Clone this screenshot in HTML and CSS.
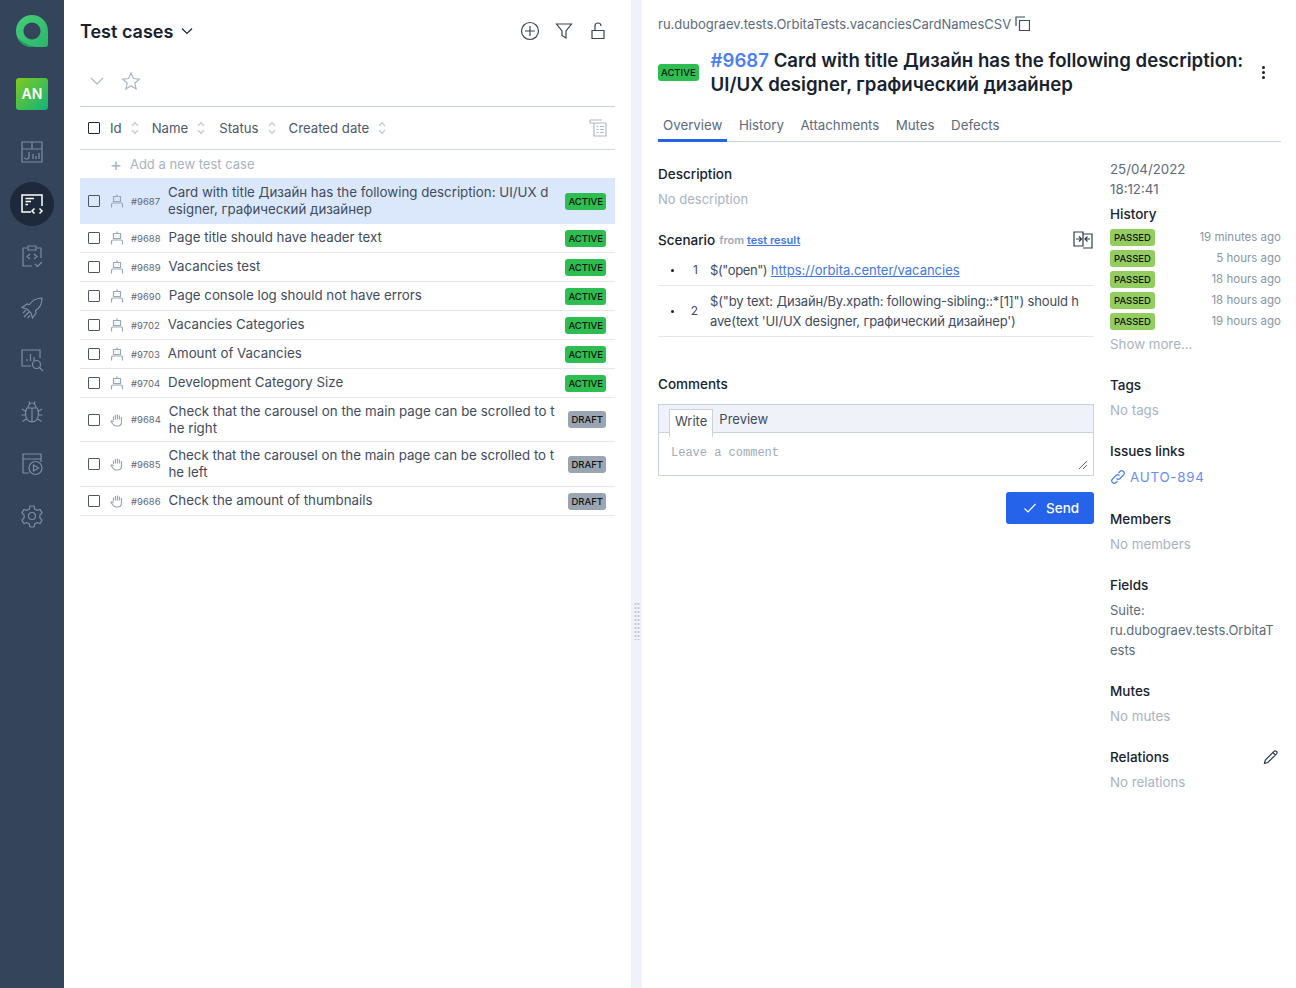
FILE: index.html
```html
<!DOCTYPE html>
<html lang="en">
<head>
    <meta charset="UTF-8">
    <meta name="viewport" content="width=device-width, initial-scale=1.0">
    <title>Test cases</title>
    <link rel="stylesheet" href="styles.css">
</head>
<body>
    <nav class="sidebar">
        <svg class="logo" width="34" height="34" viewBox="0 0 34 34">
            <defs>
                <linearGradient id="logoFill" x1="0" y1="0" x2="1" y2="1">
                    <stop offset="0" stop-color="#45cf78"/>
                    <stop offset="1" stop-color="#2bb56b"/>
                </linearGradient>
            </defs>
            <path d="M17 1C8 1 1 8 1 17s7 16 16 16h13c1.800 0 3-1.200 3-3V17C33 8 26 1 17 1zm0 7.500c4.700 0 8.500 3.800 8.500 8.500s-3.800 8.500-8.500 8.500-8.500-3.800-8.500-8.500 3.800-8.500 8.500-8.500z" fill="url(#logoFill)"/>
            <path d="M2 23c3 6.500 8 10 15 10h4C13 31.500 7 28 2 23z" fill="#1f9e63"/>
        </svg>
        <div class="avatar">AN</div>
        <a class="nav-item">
            <svg width="24" height="24" viewBox="0 0 24 24"><path d="M2 2h20v20H2zM2 9h20M12 2v7M9 12v5c0 1.500-1 2-2.500 2s-2-.5-2.500-1.500M13 14v5M16 16v3M19 13v6"/></svg>
        </a>
        <a class="nav-item active">
            <svg width="24" height="24" viewBox="0 0 24 24"><path d="M11 20H2V3h20v11M5.500 6.500H14M5.500 9.500H11M5.500 12.500H8M14.500 16.500L12 19l2.500 2.500M19.500 16.500L22 19l-2.500 2.500"/></svg>
        </a>
        <a class="nav-item">
            <svg width="24" height="24" viewBox="0 0 24 24"><path d="M7 4H3v18h9M17 4h4v10M8 2h8v4H8zM10 10l-3 2.500L10 15M14 10l3 2.500-3 2.500M15 20l2.500 2.500L22 18"/></svg>
        </a>
        <a class="nav-item">
            <svg width="24" height="24" viewBox="0 0 24 24"><path d="M22 2c-6 0-9.500 2-12.500 6.500L7 8l-5 3.500 5 1.500 4 4 1.500 5 3.500-5-.5-2.500C20 12 22 8 22 2zM3 17l3-3M4 21l5-5M7.500 22l2.500-2.500"/></svg>
        </a>
        <a class="nav-item">
            <svg width="24" height="24" viewBox="0 0 24 24"><path d="M11 18H2V2h18v8M7 13v-2M10.500 13V6M14 13V9"/><circle cx="16.500" cy="16.500" r="4"/><path d="M19.500 19.500L23 23"/></svg>
        </a>
        <a class="nav-item">
            <svg width="24" height="24" viewBox="0 0 24 24"><path d="M7 8h10c1 2 1.500 4 1.500 6 0 5-3 8-6.500 8s-6.500-3-6.500-8c0-2 .5-4 1.500-6zM8 8c0-3 2-5 4-5s4 2 4 5M12 8v14M9 1.500L10 4M15 1.500L14 4M5.500 11L2 9M18.500 11L22 9M5.500 15H1.500M18.500 15h4M6 19l-3.500 2.500M18 19l3.500 2.500"/></svg>
        </a>
        <a class="nav-item">
            <svg width="24" height="24" viewBox="0 0 24 24"><path d="M9 21H3V2h18v8M3 7h18"/><circle cx="15.500" cy="16" r="6.500"/><path d="M13.500 13v6l5-3z"/></svg>
        </a>
        <a class="nav-item">
            <svg width="24" height="24" viewBox="0 0 24 24"><circle cx="12" cy="12" r="3.500"/><path d="M10 2h4l.7 3 2.400 1.400 3-.9 2 3.500-2.200 2.100v2.800l2.200 2.100-2 3.500-3-.9-2.400 1.400-.7 3h-4l-.7-3-2.400-1.400-3 .9-2-3.500 2.200-2.100v-2.800L1.900 9l2-3.500 3 .9 2.400-1.400z"/></svg>
        </a>
    </nav>

    <main class="cases-panel">
        <header class="cases-header">
            <h1>Test cases</h1>
            <svg class="chevron" width="14" height="14" viewBox="0 0 14 14"><path d="M2 4.500l5 5 5-5"/></svg>
            <div class="cases-actions">
                <svg width="20" height="20" viewBox="0 0 20 20"><circle cx="10" cy="10" r="8.500"/><path d="M10 5v10M5 10h10"/></svg>
                <svg width="20" height="20" viewBox="0 0 20 20"><path d="M2.500 3h15l-5.500 7v7l-4-2.500V10z"/></svg>
                <svg width="20" height="20" viewBox="0 0 20 20"><path d="M4 9.500h12v8H4zM7 9.500V5c0-1.500 1-3 3-3s3 1.500 3 3"/></svg>
            </div>
        </header>

        <div class="cases-tools">
            <svg class="tool-chevron" width="16" height="16" viewBox="0 0 16 16"><path d="M2 5l6 6 6-6"/></svg>
            <svg class="tool-star" width="20" height="20" viewBox="0 0 20 20"><path d="M10 2l2.400 5.500 5.800.6-4.400 3.900 1.300 5.900L10 14.800 4.900 17.900l1.300-5.900L1.800 8.100l5.800-.6z"/></svg>
        </div>

        <div class="table-head">
            <span class="checkbox dark"></span>
            <span class="sort-col col-id">Id</span>
            <svg class="sort" width="8" height="14" viewBox="0 0 8 14"><path d="M1 5l3-3.500L7 5M1 9l3 3.500L7 9"/></svg>
            <span class="sort-col col-name">Name</span>
            <svg class="sort" width="8" height="14" viewBox="0 0 8 14"><path d="M1 5l3-3.500L7 5M1 9l3 3.500L7 9"/></svg>
            <span class="sort-col col-status">Status</span>
            <svg class="sort" width="8" height="14" viewBox="0 0 8 14"><path d="M1 5l3-3.500L7 5M1 9l3 3.500L7 9"/></svg>
            <span class="sort-col col-date">Created date</span>
            <svg class="sort" width="8" height="14" viewBox="0 0 8 14"><path d="M1 5l3-3.500L7 5M1 9l3 3.500L7 9"/></svg>
            <svg class="columns-icon" width="18" height="18" viewBox="0 0 18 18"><path d="M1 1h12M1 1v3h4M5 4h12v13H5zM7.500 7.500h2M11 7.500h4M7.500 10.500h2M11 10.500h4M7.500 13.500h2M11 13.500h4"/></svg>
        </div>

        <div class="add-row"><span class="plus">+</span> Add a new test case</div>

        <div class="row selected">
            <span class="checkbox"></span>
            <svg class="type-icon" width="14" height="14" viewBox="0 0 14 14"><path d="M3.500 2.500h7v5h-7zM7 2.500V.5M1.500 13.500v-3c0-1 .7-1.500 1.500-1.500h8c.8 0 1.500.5 1.500 1.500v3M5.500 5h.5M8 5h.5"/></svg>
            <span class="case-id">#9687</span>
            <span class="case-title">Card with title Дизайн has the following description: UI/UX designer, графический дизайнер</span>
            <span class="badge active-badge">ACTIVE</span>
        </div>
        <div class="row">
            <span class="checkbox"></span>
            <svg class="type-icon" width="14" height="14" viewBox="0 0 14 14"><path d="M3.500 2.500h7v5h-7zM7 2.500V.5M1.500 13.500v-3c0-1 .7-1.500 1.500-1.500h8c.8 0 1.500.5 1.500 1.500v3M5.500 5h.5M8 5h.5"/></svg>
            <span class="case-id">#9688</span>
            <span class="case-title">Page title should have header text</span>
            <span class="badge active-badge">ACTIVE</span>
        </div>
        <div class="row">
            <span class="checkbox"></span>
            <svg class="type-icon" width="14" height="14" viewBox="0 0 14 14"><path d="M3.500 2.500h7v5h-7zM7 2.500V.5M1.500 13.500v-3c0-1 .7-1.500 1.500-1.500h8c.8 0 1.500.5 1.500 1.500v3M5.500 5h.5M8 5h.5"/></svg>
            <span class="case-id">#9689</span>
            <span class="case-title">Vacancies test</span>
            <span class="badge active-badge">ACTIVE</span>
        </div>
        <div class="row">
            <span class="checkbox"></span>
            <svg class="type-icon" width="14" height="14" viewBox="0 0 14 14"><path d="M3.500 2.500h7v5h-7zM7 2.500V.5M1.500 13.500v-3c0-1 .7-1.500 1.500-1.500h8c.8 0 1.500.5 1.500 1.500v3M5.500 5h.5M8 5h.5"/></svg>
            <span class="case-id">#9690</span>
            <span class="case-title">Page console log should not have errors</span>
            <span class="badge active-badge">ACTIVE</span>
        </div>
        <div class="row">
            <span class="checkbox"></span>
            <svg class="type-icon" width="14" height="14" viewBox="0 0 14 14"><path d="M3.500 2.500h7v5h-7zM7 2.500V.5M1.500 13.500v-3c0-1 .7-1.500 1.500-1.500h8c.8 0 1.500.5 1.500 1.500v3M5.500 5h.5M8 5h.5"/></svg>
            <span class="case-id">#9702</span>
            <span class="case-title">Vacancies Categories</span>
            <span class="badge active-badge">ACTIVE</span>
        </div>
        <div class="row">
            <span class="checkbox"></span>
            <svg class="type-icon" width="14" height="14" viewBox="0 0 14 14"><path d="M3.500 2.500h7v5h-7zM7 2.500V.5M1.500 13.500v-3c0-1 .7-1.500 1.500-1.500h8c.8 0 1.500.5 1.500 1.500v3M5.500 5h.5M8 5h.5"/></svg>
            <span class="case-id">#9703</span>
            <span class="case-title">Amount of Vacancies</span>
            <span class="badge active-badge">ACTIVE</span>
        </div>
        <div class="row">
            <span class="checkbox"></span>
            <svg class="type-icon" width="14" height="14" viewBox="0 0 14 14"><path d="M3.500 2.500h7v5h-7zM7 2.500V.5M1.500 13.500v-3c0-1 .7-1.500 1.500-1.500h8c.8 0 1.500.5 1.500 1.500v3M5.500 5h.5M8 5h.5"/></svg>
            <span class="case-id">#9704</span>
            <span class="case-title">Development Category Size</span>
            <span class="badge active-badge">ACTIVE</span>
        </div>
        <div class="row tall">
            <span class="checkbox"></span>
            <svg class="type-icon" width="14" height="14" viewBox="0 0 14 14"><path d="M3.500 7V3.500M5.500 6.500V2M7.500 6.500V1.500M9.500 6.500V2.500M11.500 7V4v5c0 2.500-1.500 4-4 4H6c-1.500 0-2.500-1-3.500-2.500L1 8.500C1.500 7.500 2.800 7.800 3.500 9"/></svg>
            <span class="case-id">#9684</span>
            <span class="case-title">Check that the carousel on the main page can be scrolled to the right</span>
            <span class="badge draft-badge">DRAFT</span>
        </div>
        <div class="row tall">
            <span class="checkbox"></span>
            <svg class="type-icon" width="14" height="14" viewBox="0 0 14 14"><path d="M3.500 7V3.500M5.500 6.500V2M7.500 6.500V1.500M9.500 6.500V2.500M11.500 7V4v5c0 2.500-1.500 4-4 4H6c-1.500 0-2.500-1-3.500-2.500L1 8.500C1.500 7.500 2.800 7.800 3.500 9"/></svg>
            <span class="case-id">#9685</span>
            <span class="case-title">Check that the carousel on the main page can be scrolled to the left</span>
            <span class="badge draft-badge">DRAFT</span>
        </div>
        <div class="row">
            <span class="checkbox"></span>
            <svg class="type-icon" width="14" height="14" viewBox="0 0 14 14"><path d="M3.500 7V3.500M5.500 6.500V2M7.500 6.500V1.500M9.500 6.500V2.500M11.500 7V4v5c0 2.500-1.500 4-4 4H6c-1.500 0-2.500-1-3.500-2.500L1 8.500C1.500 7.500 2.800 7.800 3.500 9"/></svg>
            <span class="case-id">#9686</span>
            <span class="case-title">Check the amount of thumbnails</span>
            <span class="badge draft-badge">DRAFT</span>
        </div>
    </main>

    <div class="gutter"><div class="grip"></div></div>

    <section class="detail">
        <div class="suite-path">
            ru.dubograev.tests.OrbitaTests.vacanciesCardNamesCSV
            <svg width="15" height="15" viewBox="0 0 15 15"><path d="M4.500 4.500h10v10h-10zM1 10V1h9"/></svg>
        </div>
        <div class="title-row">
            <span class="badge active-badge">ACTIVE</span>
            <h2><a class="title-id">#9687</a> Card with title Дизайн has the following description: UI/UX designer, графический дизайнер</h2>
            <div class="more"><i></i><i></i><i></i></div>
        </div>
        <div class="tabs">
            <a class="tab current">Overview</a>
            <a class="tab">History</a>
            <a class="tab">Attachments</a>
            <a class="tab">Mutes</a>
            <a class="tab">Defects</a>
        </div>

        <div class="detail-body">
            <div class="detail-main">
                <h3>Description</h3>
                <p class="empty">No description</p>

                <div class="scenario-head">
                    <h3>Scenario</h3>
                    <span class="from">from <a href="#">test result</a></span>
                    <svg width="20" height="18" viewBox="0 0 20 18"><path d="M10 1H1v14h9V1zM10 3h9v14h-9M3 8h5M6 5.500L8.500 8 6 10.500M17 8h-5M14.500 5.500L12 8l2.500 2.500"/></svg>
                </div>
                <div class="step">
                    <span class="dot"></span>
                    <span class="step-no">1</span>
                    <span class="step-text"><span class="step-cmd">$("open")</span> <a href="#">https://orbita.center/vacancies</a></span>
                </div>
                <div class="step">
                    <span class="dot"></span>
                    <span class="step-no">2</span>
                    <span class="step-text long">$("by text: Дизайн/By.xpath: following-sibling::*[1]") should have(text 'UI/UX designer, графический дизайнер')</span>
                </div>

                <h3 class="comments-title">Comments</h3>
                <div class="editor">
                    <div class="editor-tabs">
                        <span class="editor-tab current">Write</span>
                        <span class="editor-tab">Preview</span>
                    </div>
                    <div class="editor-input">
                        Leave a comment
                        <svg class="resize" width="10" height="10" viewBox="0 0 10 10"><path d="M1 9l8-8M5 9l4-4"/></svg>
                    </div>
                </div>
                <div class="send-row">
                    <button class="send">
                        <svg width="14" height="14" viewBox="0 0 14 14"><path d="M1.500 7.500l3.500 3.500 7.500-8"/></svg>
                        Send
                    </button>
                </div>
            </div>

            <aside class="detail-side">
                <div class="created">25/04/2022<br>18:12:41</div>
                <h3 class="history-title">History</h3>
                <div class="history-row"><span class="badge passed">PASSED</span><span class="ago">19 minutes ago</span></div>
                <div class="history-row"><span class="badge passed">PASSED</span><span class="ago">5 hours ago</span></div>
                <div class="history-row"><span class="badge passed">PASSED</span><span class="ago">18 hours ago</span></div>
                <div class="history-row"><span class="badge passed">PASSED</span><span class="ago">18 hours ago</span></div>
                <div class="history-row"><span class="badge passed">PASSED</span><span class="ago">19 hours ago</span></div>
                <p class="empty show-more">Show more...</p>

                <h3 class="side-title">Tags</h3>
                <p class="empty">No tags</p>

                <h3 class="side-title">Issues links</h3>
                <a class="issue-link">
                    <svg width="16" height="16" viewBox="0 0 16 16"><path d="M6.500 9.500c1 1 2.500 1 3.500 0l3.500-3.500c1-1 1-2.500 0-3.500s-2.500-1-3.500 0L8.500 4M9.500 6.500c-1-1-2.500-1-3.500 0L2.500 10c-1 1-1 2.500 0 3.500s2.500 1 3.500 0L7.500 12"/></svg>
                    AUTO-894
                </a>

                <h3 class="side-title after-link">Members</h3>
                <p class="empty">No members</p>

                <h3 class="side-title">Fields</h3>
                <p class="field-value">Suite:<br>ru.dubograev.tests.OrbitaTests</p>

                <h3 class="side-title">Mutes</h3>
                <p class="empty">No mutes</p>

                <div class="relations-head">
                    <h3>Relations</h3>
                    <svg width="16" height="16" viewBox="0 0 16 16"><path d="M1.500 14.500l.8-3.500L11 2.300c.7-.7 1.800-.7 2.500 0s.7 1.800 0 2.500L4.800 13.500zM9.800 3.500l2.700 2.700"/></svg>
                </div>
                <p class="empty">No relations</p>
            </aside>
        </div>
    </section>
</body>
</html>
```

FILE: styles.css
```css
* {
    box-sizing: border-box;
}
html, body {
    height: 100%;
}
body {
    margin: 0;
    display: flex;
    height: 988px;
    overflow: hidden;
    background: white;
    font-family: Inter, "Noto Sans", sans-serif;
    font-size: 13.3px;
    color: #3f4b5e;
}
svg {
    fill: none;
    stroke: currentColor;
    stroke-width: 1.2;
    flex: none;
}
h1, h2, h3, p {
    margin: 0;
}
a {
    color: #4277ec;
}

/* sidebar */
.sidebar {
    width: 64px;
    flex: none;
    background: #34445a;
    display: flex;
    flex-direction: column;
    align-items: center;
    padding-top: 14px;
}
.logo {
    stroke: none;
}
.avatar {
    width: 32px;
    height: 32px;
    margin-top: 30px;
    border-radius: 3px;
    background: linear-gradient(135deg, #7ecb1f, #12b37a);
    color: white;
    font-weight: 600;
    font-size: 14px;
    line-height: 32px;
    text-align: center;
}
.nav-item {
    width: 44px;
    height: 44px;
    margin-top: 8px;
    display: flex;
    align-items: center;
    justify-content: center;
    border-radius: 50%;
    color: #7f8ca0;
}
.avatar + .nav-item {
    margin-top: 20px;
}
.nav-item.active {
    background: #1e2a3b;
    color: white;
}
.nav-item.active svg {
    stroke-width: 1.5;
}

/* test cases list */
.cases-panel {
    width: 567px;
    flex: none;
    padding: 0 16px;
}
.cases-header {
    height: 62px;
    display: flex;
    align-items: center;
    gap: 7px;
}
.cases-header h1 {
    font-size: 18px;
    font-weight: 600;
    color: #18222f;
}
.chevron {
    color: #18222f;
}
.cases-actions {
    margin-left: auto;
    margin-right: 7px;
    display: flex;
    gap: 14px;
    color: #3a4557;
}
.cases-tools {
    height: 44px;
    display: flex;
    align-items: center;
    gap: 16px;
    padding-left: 9px;
    padding-bottom: 6px;
    color: #aab5c6;
}
.table-head {
    height: 44px;
    display: flex;
    align-items: center;
    border-top: 1px solid #c9d3e0;
    border-bottom: 1px solid #d3dae5;
}
.checkbox {
    width: 12px;
    height: 12px;
    margin-left: 8px;
    flex: none;
    border: 1.500px solid #4a5668;
    border-radius: 1px;
}
.checkbox.dark {
    border-color: #1c2636;
}
.sort-col {
    color: #4c586a;
    font-size: 13.2px;
}
.col-id { margin-left: 10px; }
.col-name { margin-left: 13px; }
.col-status { margin-left: 14px; }
.col-date { margin-left: 13px; }
.sort {
    margin-left: 9px;
    color: #c4ccd6;
}
.columns-icon {
    margin-left: auto;
    margin-right: 8px;
    color: #aeb9c9;
}
.add-row {
    height: 28px;
    padding-left: 30px;
    display: flex;
    align-items: center;
    color: #aab3c2;
    font-size: 13px;
}
.plus {
    font-size: 18px;
    margin-right: 8px;
}
.row {
    min-height: 29px;
    display: flex;
    align-items: center;
    border-bottom: 1px solid #e3e7ee;
}
.row.tall {
    min-height: 44px;
}
.row.tall + .row.tall {
    min-height: 45px;
}
.row.selected {
    min-height: 46px;
    background: #dbe8fb;
    border-bottom: 0;
}
.type-icon {
    margin-left: 10px;
    color: #9aa5b5;
}
.case-id {
    margin-left: 7px;
    flex: none;
    font-size: 9.500px;
    color: #5d6878;
}
.case-title {
    margin-left: 8px;
    margin-top: -2px;
    width: 386px;
    flex: none;
    word-break: break-all;
    line-height: 17px;
}
.row.selected .case-title, .row.tall .case-title {
    margin-top: 0;
}
.badge {
    display: inline-block;
    font-size: 9.500px;
    font-weight: 500;
    line-height: 17px;
    padding: 0 3px;
    border-radius: 3px;
    color: #111;
}
.row .badge {
    margin-left: auto;
    margin-right: 9px;
}
.active-badge {
    background: #2dbd50;
}
.draft-badge {
    background: #9aa5b1;
}
.passed {
    background: #93cd5f;
    width: 45px;
    text-align: center;
    padding: 0;
}

/* gutter */
.gutter {
    width: 11px;
    flex: none;
    background: #eff2f8;
    display: flex;
    align-items: center;
    justify-content: center;
}
.grip {
    width: 6px;
    height: 38px;
    margin-top: 254px;
    background: radial-gradient(circle, #c3c9d2 1px, transparent 1.200px) 0 0 / 3px 4px;
}

/* detail */
.detail {
    flex: 1;
    padding: 0 15px 0 16px;
    min-width: 0;
}
.suite-path {
    margin-top: 15px;
    display: flex;
    align-items: center;
    gap: 4px;
    height: 17px;
    color: #5d6a7c;
    font-size: 13px;
}
.suite-path svg {
    color: #3f4b5e;
}
.title-row {
    display: flex;
    align-items: center;
    margin-top: 16px;
}
.title-row h2 {
    margin-left: 12px;
    flex: 1;
    font-size: 18.600px;
    font-weight: 600;
    line-height: 24px;
    color: #18222f;
}
.title-id {
    color: #4a80ee;
}
.more {
    width: 36px;
    display: flex;
    flex-direction: column;
    align-items: center;
    gap: 2px;
}
.more i {
    width: 3px;
    height: 3px;
    border-radius: 50%;
    background: #18222f;
}
.tabs {
    margin-top: 15px;
    display: flex;
    gap: 16.500px;
    border-bottom: 1px solid #c9d3e6;
    height: 31px;
}
.tab {
    padding: 6px 5px 0;
    margin-right: -10px;
    color: #5d6a7c;
    height: 31px;
}
.tab.current {
    border-bottom: 3px solid #2563eb;
}
.detail-body {
    display: flex;
    gap: 16px;
    margin-top: 22px;
}
.detail-main {
    width: 436px;
    flex: none;
}
.detail-side {
    flex: 1;
    margin-top: -5px;
    min-width: 0;
}
h3 {
    font-size: 13.500px;
    font-weight: 500;
    line-height: 20px;
    color: #18222f;
}
.empty {
    color: #a9b3c3;
    line-height: 20px;
}
.detail-main .empty {
    margin-top: 5px;
    font-size: 13px;
}
.scenario-head {
    margin-top: 21px;
    margin-bottom: 5px;
    display: flex;
    align-items: center;
    gap: 4px;
}
.scenario-head svg {
    margin-left: auto;
    margin-right: 1px;
    color: #2f3a4a;
}
.from {
    font-size: 11px;
    font-weight: 600;
    color: #a0a9b8;
}
.step {
    display: flex;
    align-items: center;
    padding: 5px 0;
    min-height: 31px;
    border-bottom: 1px solid #e3e7ee;
    line-height: 20px;
    font-size: 13px;
}
.dot {
    width: 3px;
    height: 3px;
    margin-left: 13px;
    border-radius: 50%;
    background: #18222f;
    flex: none;
}
.step-no {
    width: 24px;
    text-align: right;
    flex: none;
    margin-right: 12px;
    font-size: 12px;
}
.step-text {
    width: 370px;
    flex: none;
    word-break: break-all;
}
.step-text.long {
    letter-spacing: -0.15px;
}
.step-cmd {
    letter-spacing: -0.4px;
}
.comments-title {
    margin-top: 37px;
}
.editor {
    margin-top: 10px;
    border: 1px solid #c9d3e0;
}
.editor-tabs {
    height: 28px;
    display: flex;
    padding-left: 10px;
    background: #eff2f8;
    border-bottom: 1px solid #c9d3e0;
    font-size: 13px;
}
.editor-tab {
    padding: 6px 5px 0 6px;
    height: 28px;
}
.editor-tab.current {
    margin-top: 4px;
    padding: 3px 5px 0;
    border: 1px solid #c9d3e0;
    border-bottom: 0;
    background: white;
}
.editor-input {
    position: relative;
    height: 42px;
    padding: 13px 12px;
    font-family: "Liberation Mono", monospace;
    font-size: 12px;
    color: #a0abbb;
}
.resize {
    position: absolute;
    right: 5px;
    bottom: 5px;
    stroke-width: 0.8;
    color: #444;
}
.send-row {
    display: flex;
    justify-content: flex-end;
    margin-top: 16px;
}
.send {
    width: 88px;
    height: 32px;
    display: flex;
    align-items: center;
    gap: 9px;
    padding: 0 0 0 17px;
    border: 0;
    border-radius: 3px;
    background: #2563eb;
    color: white;
    font: 500 13.500px Inter, sans-serif;
}
.created {
    line-height: 20px;
    color: #5d6a7c;
}
.history-title {
    margin-top: 5px;
    margin-bottom: 3px;
}
.history-row {
    height: 21px;
    display: flex;
    align-items: center;
    justify-content: space-between;
    font-size: 11.500px;
    color: #8a95a5;
}
.ago {
    margin-top: -2px;
}
.show-more {
    margin-top: 2px;
}
.side-title {
    margin-top: 21px;
}
.side-title.after-link {
    margin-top: 22px;
}
.side-title + .empty {
    margin-top: 5px;
}
.issue-link {
    margin-top: 6px;
    display: flex;
    align-items: center;
    gap: 4px;
    line-height: 20px;
    color: #6a8cf0;
    letter-spacing: 0.8px;
}
.issue-link svg {
    color: #4a80ee;
}
.field-value {
    margin-top: 5px;
    width: 165px;
    line-height: 20px;
    color: #5d6a7c;
    font-size: 13px;
    word-break: break-all;
}
.relations-head {
    margin-top: 21px;
    display: flex;
    align-items: center;
    justify-content: space-between;
    padding-right: 2px;
}
.relations-head svg {
    color: #2f3a4a;
}
.relations-head + .empty {
    margin-top: 5px;
}
```
